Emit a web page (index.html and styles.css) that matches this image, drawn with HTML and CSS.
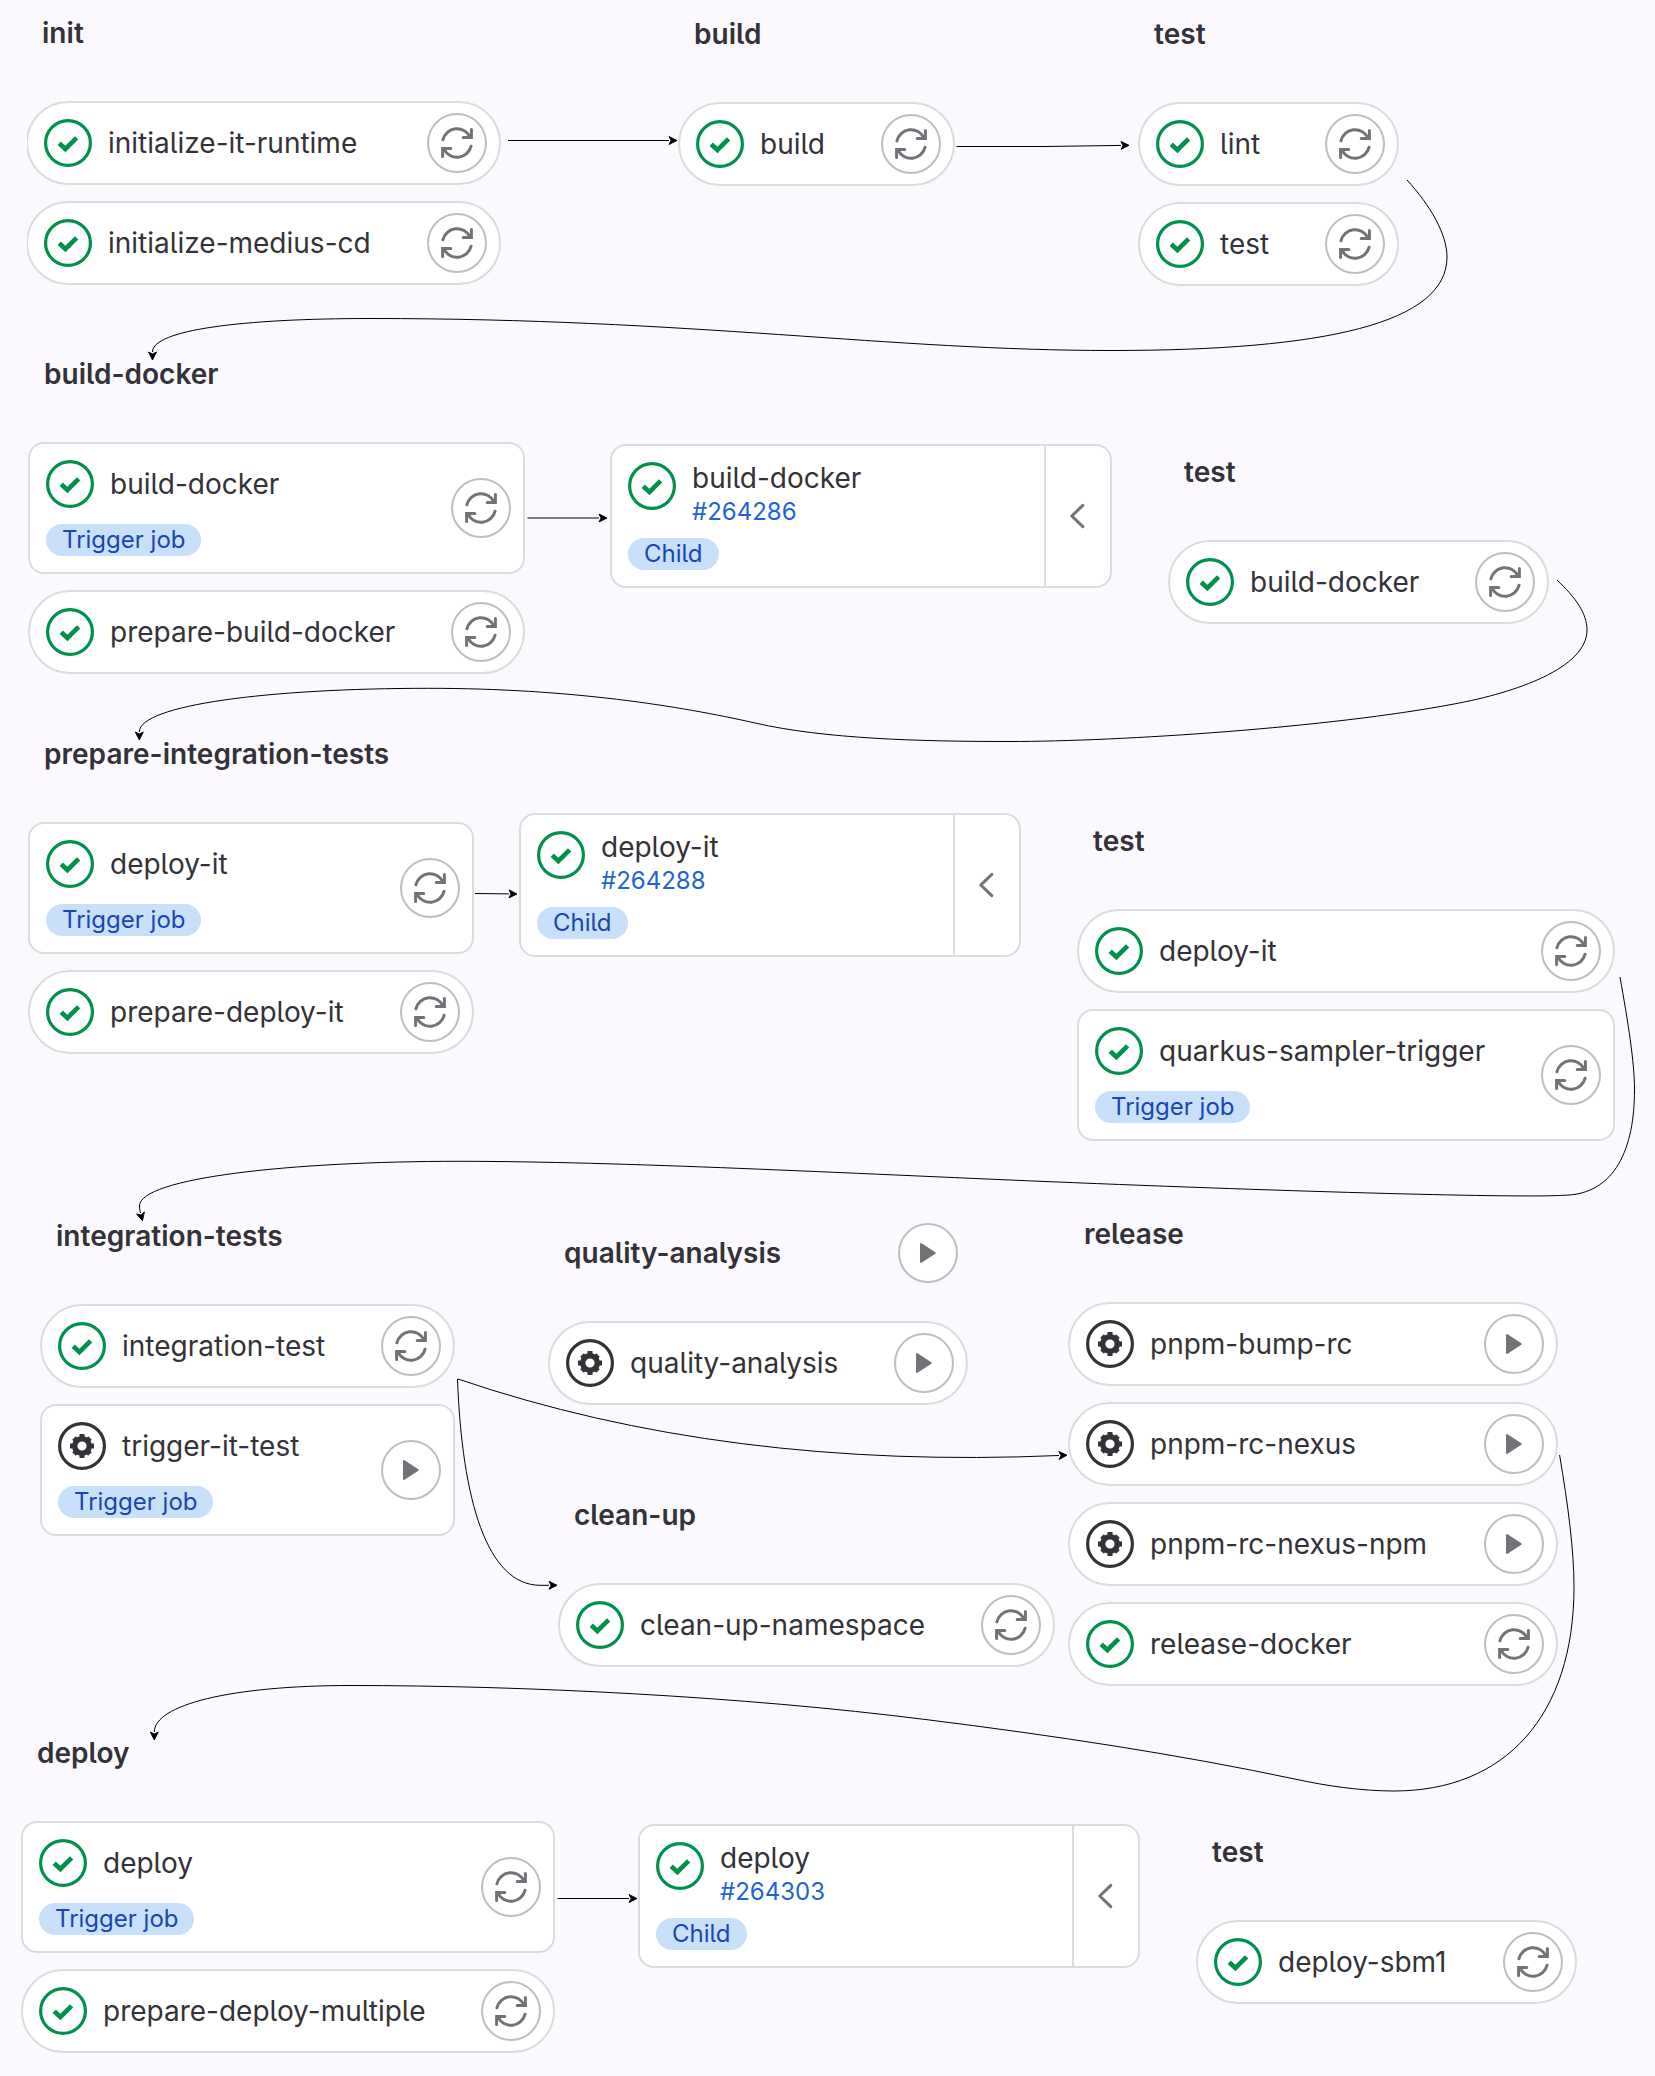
FILE: index.html
```html
<!DOCTYPE html>
<html lang="en">
<head>
<meta charset="utf-8">
<title>Pipeline</title>
<link rel="stylesheet" href="styles.css">
</head>
<body>
<svg class="defs" aria-hidden="true">
  <symbol id="success" viewBox="0 0 48 48">
    <circle cx="24" cy="24" r="22.4" fill="none" stroke="currentColor" stroke-width="3.2"/>
    <path d="M15.2 24.2 21.4 30 32.6 18.8" fill="none" stroke="currentColor" stroke-width="4.6"/>
  </symbol>
  <symbol id="manual" viewBox="0 0 48 48">
    <circle cx="24" cy="24" r="22.4" fill="none" stroke="currentColor" stroke-width="3.2"/>
    <circle cx="24" cy="24" r="7.3" fill="none" stroke="currentColor" stroke-width="5.4"/>
    <path d="M24 12v5M24 31v5M12 24h5M31 24h5M16 16l3 3M29 29l3 3M16 32l3-3M29 19l3-3" fill="none" stroke="currentColor" stroke-width="5"/>
  </symbol>
  <symbol id="retry" viewBox="0 0 16 16">
    <path d="M.95 6.4A7.25 7.25 0 0 1 14.5 4.9M15.2 1.3v4h-4.1M15.05 9.6A7.25 7.25 0 0 1 1.5 11.1M.8 14.7v-4h4.1" fill="none" stroke="currentColor" stroke-width="1.5" stroke-linecap="round"/>
  </symbol>
  <symbol id="play" viewBox="0 0 16 16">
    <path d="M4.5 3.5v9L11.4 8z" fill="currentColor" stroke="currentColor" stroke-width="1" stroke-linejoin="round"/>
  </symbol>
  <symbol id="chevron" viewBox="0 0 16 16">
    <path d="M10.4 2.7 4.9 8l5.500 5.300" fill="none" stroke="currentColor" stroke-width="1.5" stroke-linecap="round" stroke-linejoin="round"/>
  </symbol>
</svg>

<main class="canvas">
  <section class="stage stage-init">
    <header class="stage-head"><h2>init</h2></header>
    <div class="job"><svg class="status ok"><use href="#success"/></svg><span class="name">initialize-it-runtime</span><button class="action"><svg><use href="#retry"/></svg></button></div>
    <div class="job"><svg class="status ok"><use href="#success"/></svg><span class="name">initialize-medius-cd</span><button class="action"><svg><use href="#retry"/></svg></button></div>
  </section>

  <section class="stage stage-build">
    <header class="stage-head"><h2>build</h2></header>
    <div class="job"><svg class="status ok"><use href="#success"/></svg><span class="name">build</span><button class="action"><svg><use href="#retry"/></svg></button></div>
  </section>

  <section class="stage stage-test">
    <header class="stage-head"><h2>test</h2></header>
    <div class="job"><svg class="status ok"><use href="#success"/></svg><span class="name">lint</span><button class="action"><svg><use href="#retry"/></svg></button></div>
    <div class="job"><svg class="status ok"><use href="#success"/></svg><span class="name">test</span><button class="action"><svg><use href="#retry"/></svg></button></div>
  </section>

  <section class="stage stage-docker">
    <header class="stage-head"><h2>build-docker</h2></header>
    <div class="job trigger"><div class="info"><div class="line"><svg class="status ok"><use href="#success"/></svg><span class="name">build-docker</span></div><span class="badge">Trigger job</span></div><button class="action"><svg><use href="#retry"/></svg></button></div>
    <div class="job"><svg class="status ok"><use href="#success"/></svg><span class="name">prepare-build-docker</span><button class="action"><svg><use href="#retry"/></svg></button></div>
  </section>

  <article class="child child-docker">
    <div class="info"><div class="line"><svg class="status ok"><use href="#success"/></svg><div class="ref"><span class="name">build-docker</span><a class="link">#264286</a></div></div><span class="badge">Child</span></div>
    <button class="collapse"><svg><use href="#chevron"/></svg></button>
  </article>

  <section class="stage stage-docker-test">
    <header class="stage-head"><h2>test</h2></header>
    <div class="job"><svg class="status ok"><use href="#success"/></svg><span class="name">build-docker</span><button class="action"><svg><use href="#retry"/></svg></button></div>
  </section>

  <section class="stage stage-prepare">
    <header class="stage-head"><h2>prepare-integration-tests</h2></header>
    <div class="job trigger"><div class="info"><div class="line"><svg class="status ok"><use href="#success"/></svg><span class="name">deploy-it</span></div><span class="badge">Trigger job</span></div><button class="action"><svg><use href="#retry"/></svg></button></div>
    <div class="job"><svg class="status ok"><use href="#success"/></svg><span class="name">prepare-deploy-it</span><button class="action"><svg><use href="#retry"/></svg></button></div>
  </section>

  <article class="child child-deploy-it">
    <div class="info"><div class="line"><svg class="status ok"><use href="#success"/></svg><div class="ref"><span class="name">deploy-it</span><a class="link">#264288</a></div></div><span class="badge">Child</span></div>
    <button class="collapse"><svg><use href="#chevron"/></svg></button>
  </article>

  <section class="stage stage-it-test">
    <header class="stage-head"><h2>test</h2></header>
    <div class="job"><svg class="status ok"><use href="#success"/></svg><span class="name">deploy-it</span><button class="action"><svg><use href="#retry"/></svg></button></div>
    <div class="job trigger"><div class="info"><div class="line"><svg class="status ok"><use href="#success"/></svg><span class="name">quarkus-sampler-trigger</span></div><span class="badge">Trigger job</span></div><button class="action"><svg><use href="#retry"/></svg></button></div>
  </section>

  <section class="stage stage-integration">
    <header class="stage-head"><h2>integration-tests</h2></header>
    <div class="job"><svg class="status ok"><use href="#success"/></svg><span class="name">integration-test</span><button class="action"><svg><use href="#retry"/></svg></button></div>
    <div class="job trigger"><div class="info"><div class="line"><svg class="status"><use href="#manual"/></svg><span class="name">trigger-it-test</span></div><span class="badge">Trigger job</span></div><button class="action"><svg><use href="#play"/></svg></button></div>
  </section>

  <section class="stage stage-quality">
    <header class="stage-head"><h2>quality-analysis</h2><button class="action"><svg><use href="#play"/></svg></button></header>
    <div class="job"><svg class="status"><use href="#manual"/></svg><span class="name">quality-analysis</span><button class="action"><svg><use href="#play"/></svg></button></div>
  </section>

  <section class="stage stage-cleanup">
    <header class="stage-head"><h2>clean-up</h2></header>
    <div class="job"><svg class="status ok"><use href="#success"/></svg><span class="name">clean-up-namespace</span><button class="action"><svg><use href="#retry"/></svg></button></div>
  </section>

  <section class="stage stage-release">
    <header class="stage-head"><h2>release</h2></header>
    <div class="job"><svg class="status"><use href="#manual"/></svg><span class="name">pnpm-bump-rc</span><button class="action"><svg><use href="#play"/></svg></button></div>
    <div class="job"><svg class="status"><use href="#manual"/></svg><span class="name">pnpm-rc-nexus</span><button class="action"><svg><use href="#play"/></svg></button></div>
    <div class="job"><svg class="status"><use href="#manual"/></svg><span class="name">pnpm-rc-nexus-npm</span><button class="action"><svg><use href="#play"/></svg></button></div>
    <div class="job"><svg class="status ok"><use href="#success"/></svg><span class="name">release-docker</span><button class="action"><svg><use href="#retry"/></svg></button></div>
  </section>

  <section class="stage stage-deploy">
    <header class="stage-head"><h2>deploy</h2></header>
    <div class="job trigger"><div class="info"><div class="line"><svg class="status ok"><use href="#success"/></svg><span class="name">deploy</span></div><span class="badge">Trigger job</span></div><button class="action"><svg><use href="#retry"/></svg></button></div>
    <div class="job"><svg class="status ok"><use href="#success"/></svg><span class="name">prepare-deploy-multiple</span><button class="action"><svg><use href="#retry"/></svg></button></div>
  </section>

  <article class="child child-deploy">
    <div class="info"><div class="line"><svg class="status ok"><use href="#success"/></svg><div class="ref"><span class="name">deploy</span><a class="link">#264303</a></div></div><span class="badge">Child</span></div>
    <button class="collapse"><svg><use href="#chevron"/></svg></button>
  </article>

  <section class="stage stage-deploy-test">
    <header class="stage-head"><h2>test</h2></header>
    <div class="job"><svg class="status ok"><use href="#success"/></svg><span class="name">deploy-sbm1</span><button class="action"><svg><use href="#retry"/></svg></button></div>
  </section>

  <svg class="links" viewBox="0 0 1655 2076">
    <defs>
      <marker id="arrow" markerUnits="userSpaceOnUse" markerWidth="11" markerHeight="12" refX="1" refY="6" orient="auto">
        <path d="M9 6 1 2 3 6 1 10z" stroke="#000" stroke-width=".9"/>
      </marker>
    </defs>
    <path d="M508 140.500H669"/>
    <path d="M956.500 146.500H1045L1121 145.400"/>
    <path d="M1407 180C1430 205 1447 234 1447 257C1447 323 1326 350.500 1111 350.500C891 350.500 691 318.500 371 318.500C241 318.500 152.500 330 152.500 352"/>
    <path d="M527.500 518H599"/>
    <path d="M1557 580C1575 597 1587 613 1587 630C1587 668 1516 692.500 1454 704C1330 727.600 1120 741.500 1010 741.500C920 741.500 825 739 755 723C680 706 570 688.300 428.600 688.300C268.600 688.300 139.300 705 139.300 732"/>
    <path d="M475 893.500L509 893.900"/>
    <path d="M1620 977C1628 1022 1634.500 1062 1634.500 1090C1634.500 1147 1616 1195 1563 1195.300C1520 1198 1300 1192 1050 1181.700C850 1173.400 620 1161.300 459 1161.300C290 1161.300 139.500 1178 139.500 1206C139.500 1209 140 1211 140.500 1213"/>
    <path d="M458 1379Q725 1470 1059 1455.500"/>
    <path d="M457.500 1379C462 1500 487 1585 540 1585.300H549"/>
    <path d="M1559.600 1455C1568 1505 1574 1550 1574 1586.700C1574 1716 1505 1791 1394 1791C1360 1791 1325 1785.500 1297 1779.500C1180 1754.500 1050 1735 927 1719.700C740 1696 520 1685.500 351 1685.500C230 1685.500 154.300 1705 154.300 1732"/>
    <path d="M557.500 1898.500H629"/>
  </svg>
</main>
</body>
</html>
```
FILE: styles.css
```css
* {
  box-sizing: border-box;
}

body {
  margin: 0;
  background: #fbf9fd;
  color: #333238;
  font-family: Inter, "Noto Sans", sans-serif;
  font-size: 28px;
  font-feature-settings: "cv05", "ss03" 0;
}

button {
  padding: 0;
  font: inherit;
}

.defs {
  display: none;
}

/* Free canvas holding the stages and their connectors */
.canvas {
  position: relative;
  width: 1655px;
  height: 2076px;
  overflow: hidden;
}

.stage,
.child {
  position: absolute;
}

.stage {
  display: flex;
  flex-direction: column;
  gap: 16px;
}

.stage-init { left: 26px; top: 3px; width: 475px; clip-path: inset(0 0 0 1px); }
.stage-build { left: 678px; top: 4px; width: 277px; }
.stage-test { left: 1138px; top: 4px; width: 261px; }
.stage-docker { left: 28px; top: 344px; width: 497px; }
.stage-docker-test { left: 1168px; top: 442px; width: 381px; }
.stage-prepare { left: 28px; top: 724px; width: 446px; }
.stage-it-test { left: 1077px; top: 811px; width: 538px; }
.stage-integration { left: 40px; top: 1206px; width: 415px; }
.stage-quality { left: 548px; top: 1223px; width: 420px; }
.stage-cleanup { left: 558px; top: 1485px; width: 497px; }
.stage-release { left: 1068px; top: 1204px; width: 490px; }
.stage-deploy { left: 21px; top: 1723px; width: 534px; }
.stage-deploy-test { left: 1196px; top: 1822px; width: 381px; }
.child-docker { left: 610px; top: 444px; }
.child-deploy-it { left: 519px; top: 813px; }
.child-deploy { left: 638px; top: 1824px; }

.stage-head {
  display: flex;
  align-items: center;
  justify-content: space-between;
  height: 60px;
  margin-bottom: 22px;
  padding: 0 10px 0 16px;
}

.stage-head h2 {
  margin: 0;
  font-size: 28px;
  font-weight: 600;
  letter-spacing: .03px;
}

.job {
  display: flex;
  align-items: center;
  height: 84px;
  padding: 0 12px 0 16px;
  border: 2px solid #dcdcde;
  border-radius: 42px;
  background: #fff;
}

.job.trigger {
  height: 132px;
  border-radius: 16px;
}

.status {
  flex: none;
  width: 48px;
  height: 48px;
  margin-right: 16px;
  color: #333238;
}

.status.ok {
  color: #00914b;
}

.name {
  white-space: nowrap;
}

.info {
  display: flex;
  flex-direction: column;
  align-items: flex-start;
  gap: 16px;
}

.line {
  display: flex;
  align-items: center;
}

.badge {
  height: 32px;
  padding: 0 16px;
  border-radius: 16px;
  background: #c9e0fa;
  color: #1747b0;
  font-size: 24px;
  line-height: 32px;
  white-space: nowrap;
}

.action {
  display: flex;
  flex: none;
  align-items: center;
  justify-content: center;
  width: 60px;
  height: 60px;
  margin-left: auto;
  border: 2px solid #bfbfc3;
  border-radius: 50%;
  background: #fff;
  color: #737278;
}

.action svg,
.collapse svg {
  width: 32px;
  height: 32px;
}

.child {
  display: flex;
  width: 502px;
  height: 144px;
  border: 2px solid #dcdcde;
  border-radius: 16px;
  background: #fff;
}

.child .info {
  flex: 1;
  gap: 12px;
  padding: 16px;
}

.child .line {
  align-items: flex-start;
}

.ref {
  display: flex;
  flex-direction: column;
  height: 64px;
}

.ref .name {
  line-height: 32px;
}

.link {
  color: #1f63d6;
  font-size: 24px;
  line-height: 36px;
}

.collapse {
  display: flex;
  align-items: center;
  justify-content: center;
  width: 66px;
  border: 0;
  border-left: 2px solid #dcdcde;
  background: none;
  color: #737278;
}

.links {
  position: absolute;
  inset: 0;
  width: 1655px;
  height: 2076px;
  pointer-events: none;
}

.links > path {
  fill: none;
  stroke: #000;
  stroke-width: 1;
  marker-end: url(#arrow);
}
```
